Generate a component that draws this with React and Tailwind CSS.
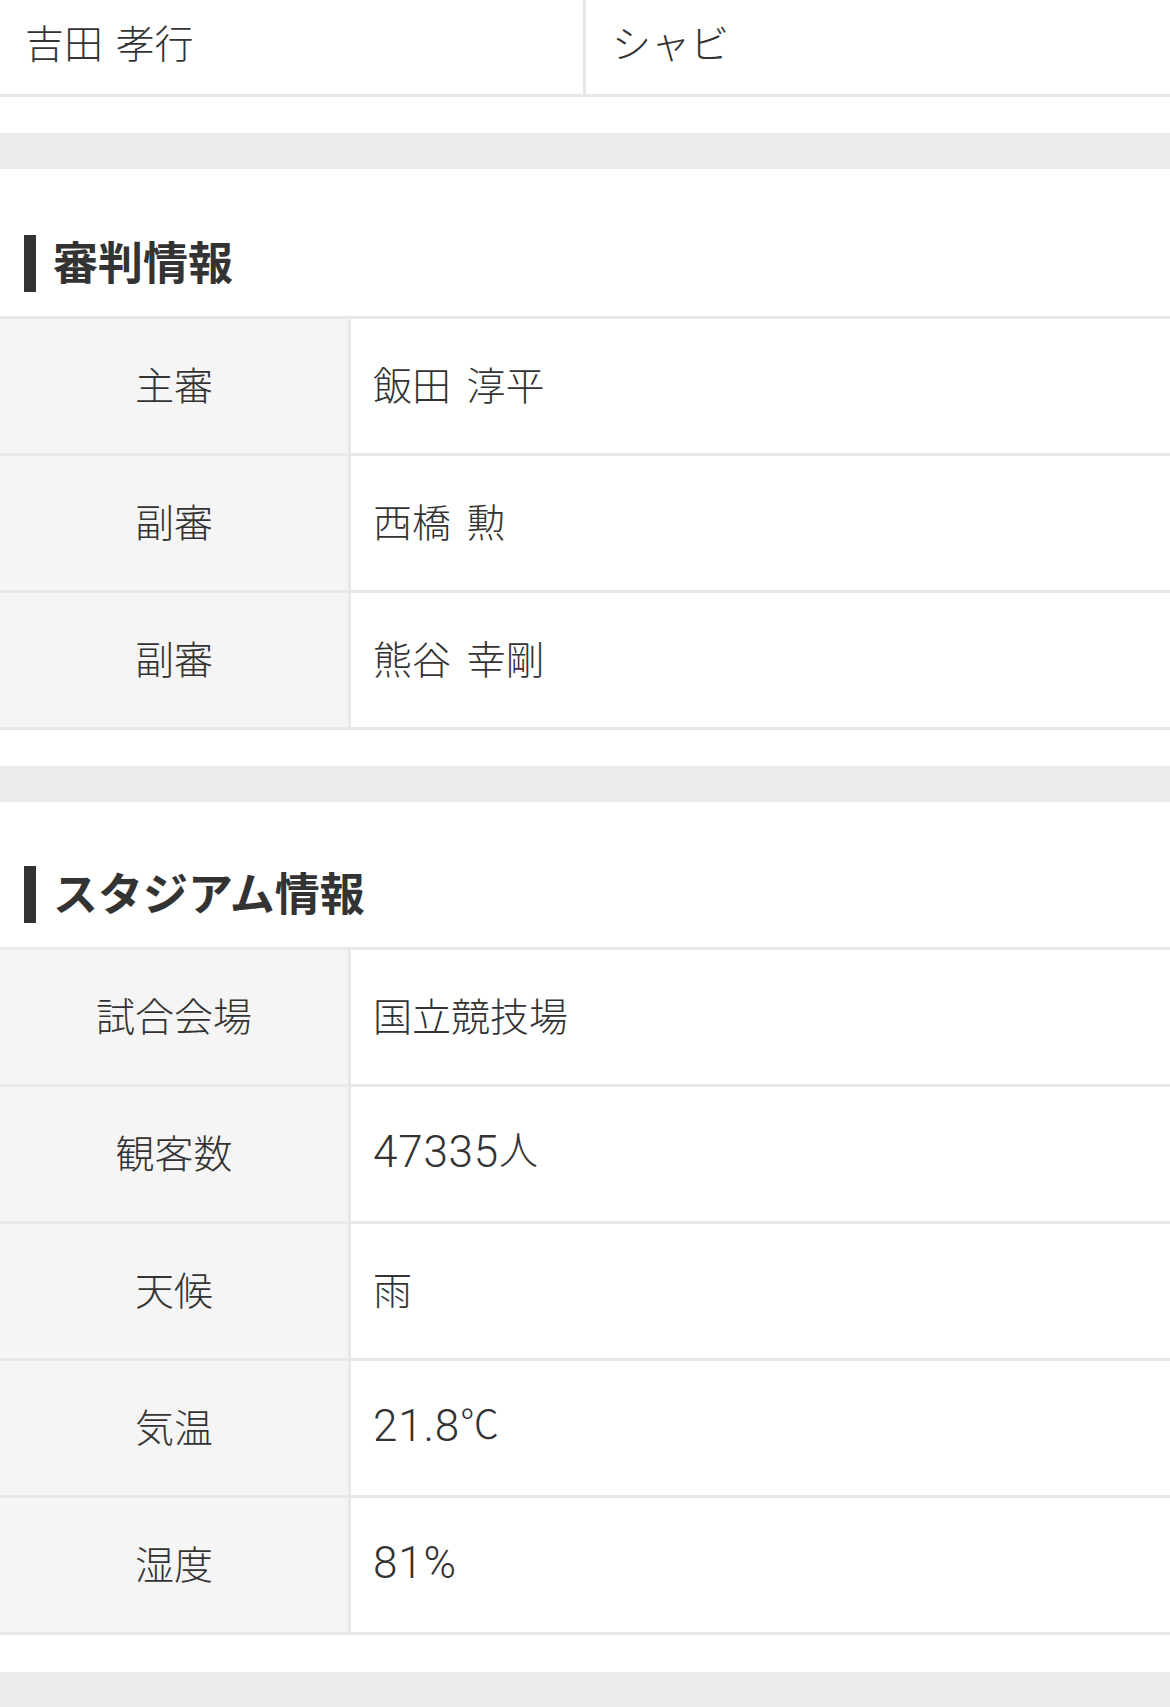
import React from "react";

const font = { fontFamily: '"Noto Sans CJK JP", "Noto Sans", sans-serif' };

function Num({ children }) {
  return (
    <span
      className="text-[44px] font-light tracking-[0.8px] align-[-3px]"
      style={{ fontFamily: 'Roboto, "Liberation Sans", "Noto Sans CJK JP", sans-serif' }}
    >
      {children}
    </span>
  );
}

function Row({ label, value }) {
  return (
    <div className="flex h-[137px] border-b-[3px] border-[#e8e8e8]">
      <div className="w-[351px] shrink-0 bg-[#f5f5f5] flex items-center justify-center pb-[6px] border-r-[3px] border-[#e8e8e8]">
        {label}
      </div>
      <div className="flex-1 flex items-center pl-[22px] pb-[6px] bg-white">
        <div className="[word-spacing:7px]">{value}</div>
      </div>
    </div>
  );
}

function Section({ title, rows, headH, gapH }) {
  return (
    <div>
      <div className="bg-white" style={{ height: gapH }} />
      <div className="h-[36px] bg-[#ececec]" />
      <div
        className="bg-white flex items-end pb-[24px] border-b-[3px] border-[#e8e8e8]"
        style={{ height: headH }}
      >
        <div className="flex items-center pl-[24px] h-[57px]">
          <div className="w-[12px] h-[57px] bg-[#333333]" />
          <div className="ml-[17px] mb-[6px] text-[45px] font-bold leading-none text-[#333333]">{title}</div>
        </div>
      </div>
      {rows.map((r, i) => (
        <Row key={i} label={r[0]} value={r[1]} />
      ))}
    </div>
  );
}

export default function App() {
  return (
    <div
      className="w-[1170px] h-[1707px] bg-white overflow-hidden text-[#333333] text-[39px] leading-none font-light"
      style={font}
    >
      <div className="flex h-[97px] border-b-[3px] border-[#e8e8e8]">
        <div className="w-[586px] border-r-[3px] border-[#e8e8e8] flex items-center pl-[25px] pb-[12px] [word-spacing:4px]">
          吉田 孝行
        </div>
        <div className="flex-1 flex items-center pl-[26px] pb-[12px]">シャビ</div>
      </div>
      <Section
        title="審判情報"
        headH={150}
        gapH={36}
        rows={[
          ["主審", "飯田 淳平"],
          ["副審", "西橋 勲"],
          ["副審", "熊谷 幸剛"],
        ]}
      />
      <Section
        title="スタジアム情報"
        headH={148}
        gapH={36}
        rows={[
          ["試合会場", "国立競技場"],
          ["観客数", <><Num>47335</Num>人</>],
          ["天候", "雨"],
          ["気温", <><Num>21.8</Num>℃</>],
          ["湿度", <Num>81%</Num>],
        ]}
      />
      <div className="h-[37px] bg-white" />
      <div className="h-[40px] bg-[#ececec]" />
    </div>
  );
}
